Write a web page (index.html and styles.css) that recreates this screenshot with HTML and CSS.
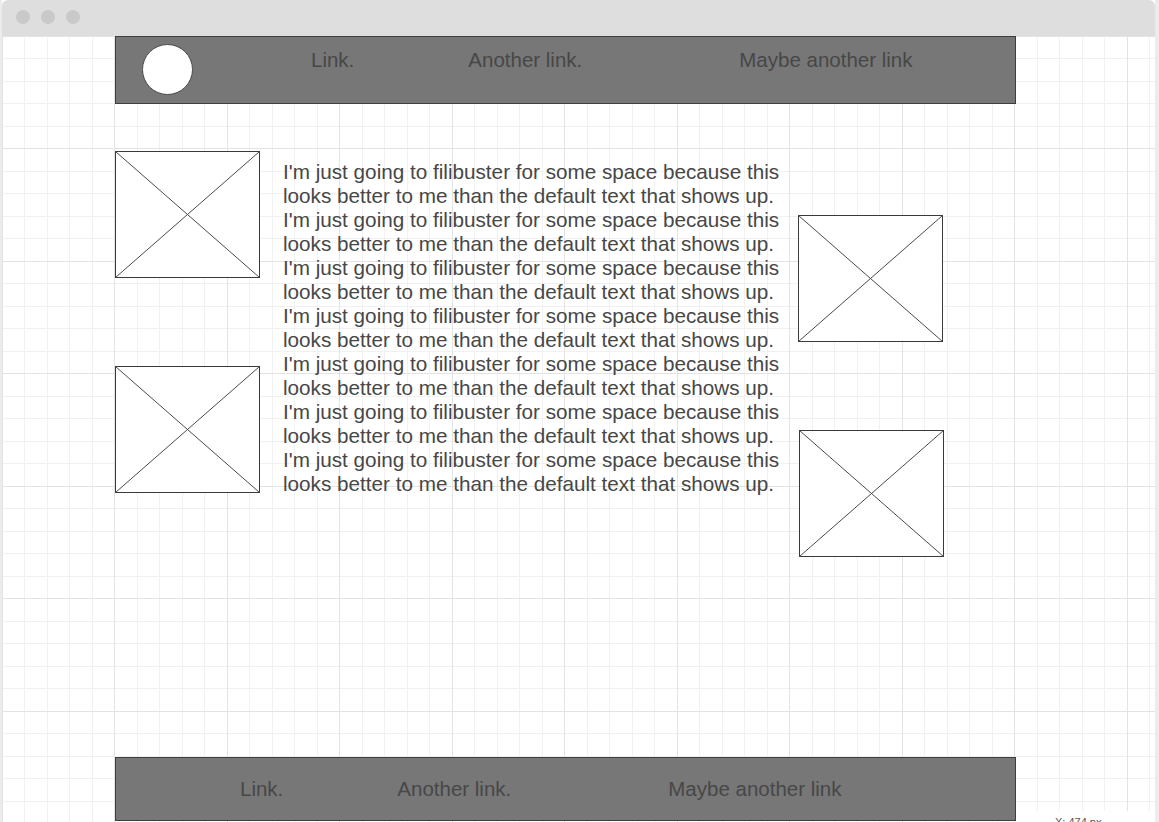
FILE: index.html
```html
<!DOCTYPE html>
<html lang="en">
<head>
<meta charset="utf-8">
<title>Wireframe</title>
<link rel="stylesheet" href="styles.css">
</head>
<body>
<div class="window">
  <div class="titlebar">
    <span class="dot"></span><span class="dot"></span><span class="dot"></span>
  </div>
  <div class="canvas">
    <div class="page">
      <header class="bar header">
        <div class="logo"></div>
        <a class="link link-a">Link.</a>
        <a class="link link-b">Another link.</a>
        <a class="link link-c">Maybe another link</a>
      </header>
      <main class="main">
        <div class="col col-left">
          <svg class="ph" viewBox="0 0 145 127" width="145" height="127"><rect x="0.5" y="0.5" width="144" height="126"/><line x1="0.5" y1="0.5" x2="144.5" y2="126.5"/><line x1="144.5" y1="0.5" x2="0.5" y2="126.5"/></svg>
          <svg class="ph" viewBox="0 0 145 127" width="145" height="127"><rect x="0.5" y="0.5" width="144" height="126"/><line x1="0.5" y1="0.5" x2="144.5" y2="126.5"/><line x1="144.5" y1="0.5" x2="0.5" y2="126.5"/></svg>
        </div>
        <div class="copy">
          <p>I'm just going to filibuster for some space because this looks better to me than the default text that shows up.</p>
          <p>I'm just going to filibuster for some space because this looks better to me than the default text that shows up.</p>
          <p>I'm just going to filibuster for some space because this looks better to me than the default text that shows up.</p>
          <p>I'm just going to filibuster for some space because this looks better to me than the default text that shows up.</p>
          <p>I'm just going to filibuster for some space because this looks better to me than the default text that shows up.</p>
          <p>I'm just going to filibuster for some space because this looks better to me than the default text that shows up.</p>
          <p>I'm just going to filibuster for some space because this looks better to me than the default text that shows up.</p>
        </div>
        <div class="col col-right">
          <svg class="ph" viewBox="0 0 145 127" width="145" height="127"><rect x="0.5" y="0.5" width="144" height="126"/><line x1="0.5" y1="0.5" x2="144.5" y2="126.5"/><line x1="144.5" y1="0.5" x2="0.5" y2="126.5"/></svg>
          <svg class="ph ph-shift" viewBox="0 0 145 127" width="145" height="127"><rect x="0.5" y="0.5" width="144" height="126"/><line x1="0.5" y1="0.5" x2="144.5" y2="126.5"/><line x1="144.5" y1="0.5" x2="0.5" y2="126.5"/></svg>
        </div>
      </main>
      <footer class="bar footer">
        <a class="link link-f">Link.</a>
        <a class="link link-b">Another link.</a>
        <a class="link link-c">Maybe another link</a>
      </footer>
    </div>
    <div class="tooltip">X: 474 px</div>
  </div>
</div>
</body>
</html>
```

FILE: styles.css
```css
* { box-sizing: border-box; }

html, body {
  margin: 0;
  padding: 0;
}

body {
  width: 1159px;
  height: 822px;
  overflow: hidden;
  background: #ececec;
  font-family: "Liberation Sans", Arial, sans-serif;
}

.window {
  margin-left: 2px;
  width: 1153px;
  height: 822px;
  display: flex;
  flex-direction: column;
  background: #ffffff;
}

.titlebar {
  height: 36px;
  flex: none;
  background: #dedede;
  border-radius: 6px 6px 0 0;
  display: flex;
  align-items: center;
  gap: 11px;
  padding-left: 14px;
  padding-bottom: 2px;
}

.dot {
  width: 14px;
  height: 14px;
  border-radius: 50%;
  background: #c9c9c9;
}

.canvas {
  position: relative;
  flex: 1;
  overflow: hidden;
  background-color: #ffffff;
  background-image:
    linear-gradient(to right, #e3e3e3 0 1px, transparent 1px 112px, #e3e3e3 112px 113px, transparent 113px),
    linear-gradient(to bottom, #e3e3e3 0 1px, transparent 1px 112px, #e3e3e3 112px 113px, transparent 113px),
    linear-gradient(to right, #f1f1f1 0 1px, transparent 1px 22px, #f1f1f1 22px 23px, transparent 23px),
    linear-gradient(to bottom, #f1f1f1 0 1px, transparent 1px 22px, #f1f1f1 22px 23px, transparent 23px);
  background-size: 225px 225px, 225px 225px, 45px 45px, 45px 45px;
}

.page {
  margin-left: 113px;
  width: 901px;
  display: flex;
  flex-direction: column;
}

.bar {
  display: flex;
  align-items: flex-start;
  background: #777777;
  border: 1px solid #3e3e3e;
}

.header {
  height: 68px;
}

.footer {
  height: 64px;
  padding-top: 19px;
}

.logo {
  width: 51px;
  height: 51px;
  margin-left: 26px;
  margin-top: 7px;
  border-radius: 50%;
  background: #ffffff;
  border: 1px solid #4a4a4a;
  flex: none;
}

.link {
  font-size: 20.5px;
  line-height: 24px;
  color: #474747;
  white-space: nowrap;
  text-decoration: none;
}

.header .link {
  margin-top: 11px;
}

.link-a { margin-left: 118px; }
.link-f { margin-left: 124px; }
.link-b { margin-left: 114px; }
.link-c { margin-left: 157px; }

.main {
  height: 653px;
  display: flex;
  align-items: flex-start;
}

.col {
  display: flex;
  flex-direction: column;
  gap: 88px;
  flex: none;
}

.col-left {
  margin-top: 47px;
}

.col-right {
  margin-top: 111px;
  margin-left: 10px;
}

.ph {
  display: block;
  width: 145px;
  height: 127px;
  background: #ffffff;
}

.ph rect {
  fill: #ffffff;
  stroke: #3a3a3a;
  stroke-width: 1;
}

.ph line {
  stroke: #4a4a4a;
  stroke-width: 1;
}

.ph-shift {
  margin-left: 1px;
}

.copy {
  width: 505px;
  margin-left: 23px;
  margin-top: 56px;
  flex: none;
}

.copy p {
  margin: 0;
  font-size: 20.7px;
  line-height: 24px;
  color: #474747;
}

.tooltip {
  position: absolute;
  left: 1015px;
  top: 775px;
  width: 138px;
  height: 24px;
  background: #ffffff;
  padding-left: 38px;
  padding-top: 5px;
  font-size: 11px;
  line-height: 13px;
  color: #555555;
}
```
